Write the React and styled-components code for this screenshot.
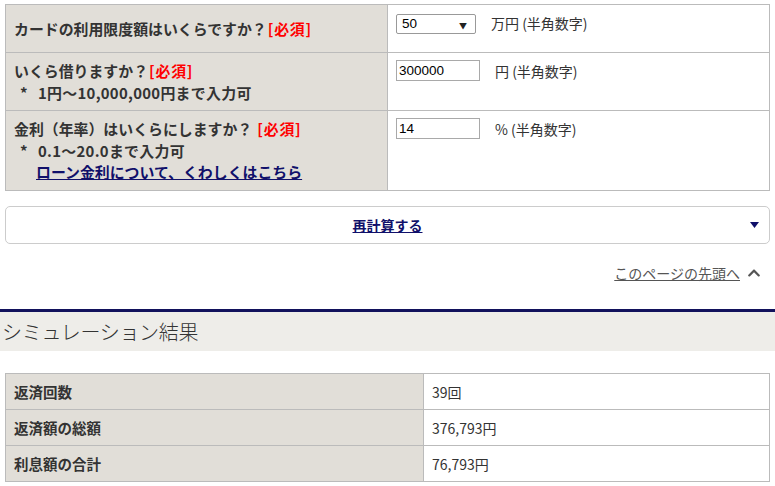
import React from 'react';
import styled, { createGlobalStyle } from 'styled-components';
import { FaChevronUp } from 'react-icons/fa';

const GlobalStyle = createGlobalStyle`
  html, body {
    margin: 0;
    padding: 0;
    background: #fff;
  }
  body {
    font-family: "Noto Sans CJK JP", "Noto Sans", sans-serif;
    color: #333;
  }
`

const Page = styled.div`
  padding: 4px 0 0;
  width: 775px;
`

const Inner = styled.div`
  padding: 0 5px;
`

const Table = styled.table`
  width: 100%;
  border-collapse: collapse;
  border: 1px solid #bbb;
  table-layout: fixed;
`

const Row = styled.tr`
  height: ${p => p.$h}px;
`

const Label = styled.th`
  box-sizing: border-box;
  width: ${p => p.$w || '50%'};
  background: #e1ded8;
  border: 1px solid #bbb;
  padding: 0 8px;
  text-align: left;
  vertical-align: middle;
  font-size: ${p => p.$size || 14.9}px;
  line-height: 21.5px;
  font-weight: bold;
  color: #333;
`

const Cell = styled.td`
  border: 1px solid #bbb;
  padding: ${p => p.$pad || '7px 8px'};
  vertical-align: ${p => p.$valign || 'top'};
  font-size: 14px;
  color: #333;
  background: #fff;
`

const Required = styled.span`
  color: #f00;
  letter-spacing: 0.8px;
  margin-left: ${p => p.$gap || 1}px;
`

const Note = styled.div`
  display: flex;
  padding-left: 5px;
  letter-spacing: 0.3px;
`

const Mark = styled.span`
  width: 18px;
  flex-shrink: 0;
  padding-left: 1px;
`

const Link = styled.a`
  display: block;
  margin-left: 22px;
  color: #10106a;
  text-decoration: underline;
  cursor: pointer;
`

const Field = styled.div`
  display: flex;
  align-items: center;
  gap: 15px;
  line-height: 20px;
`

const SelectWrap = styled.span`
  position: relative;
  display: inline-block;
  &::after {
    content: '▼';
    position: absolute;
    right: 9px;
    top: 4px;
    font-size: 8px;
    color: #222;
    pointer-events: none;
  }
`

const Select = styled.select`
  appearance: none;
  width: 80px;
  height: 20px;
  border: 1px solid #999;
  border-radius: 2px;
  background: #fff;
  padding: 0 5px;
  font-family: "Liberation Sans", Arial, sans-serif;
  font-size: 13.5px;
  color: #000;
  margin-top: 1px;
`

const Input = styled.input`
  box-sizing: border-box;
  width: 84px;
  height: 21px;
  border: 1px solid #a9a9a9;
  padding: 1px 2px;
  font-family: "Liberation Sans", Arial, sans-serif;
  font-size: 13.5px;
  color: #000;
  outline: none;
`

const Unit = styled.span`
  font-size: 14px;
  color: #333;
`

const Button = styled.div`
  position: relative;
  margin-top: 15px;
  height: 36px;
  border: 1px solid #ccc;
  border-radius: 5px;
  display: flex;
  align-items: center;
  justify-content: center;
  background: #fff;
  a {
    color: #10106a;
    font-weight: bold;
    font-size: 14px;
    text-decoration: underline;
  }
`

const Caret = styled.svg`
  position: absolute;
  right: 10px;
  top: 15px;
`

const TopLink = styled.div`
  display: flex;
  justify-content: flex-end;
  align-items: center;
  gap: 7px;
  margin-top: 19px;
  padding-right: 9px;
  a {
    color: #555;
    font-size: 14px;
    text-decoration: underline;
  }
  svg {
    color: #555;
  }
`

const Heading = styled.h2`
  margin: 26px 0 0;
  border-top: 3px solid #12125c;
  background: #eeede9;
  height: 39px;
  display: flex;
  align-items: center;
  padding-left: 2px;
  font-size: 20px;
  font-weight: 300;
  color: #333;
  letter-spacing: -0.3px;
`

const Result = styled(Table)`
  margin-top: 22px;
`

const rows = [
  ['返済回数', '39回'],
  ['返済額の総額', '376,793円'],
  ['利息額の合計', '76,793円'],
];

export default function App() {
  return (
    <Page>
      <GlobalStyle />
      <Inner>
        <Table>
          <tbody>
            <Row $h={48}>
              <Label>カードの利用限度額はいくらですか？<Required>[必須]</Required></Label>
              <Cell>
                <Field>
                  <SelectWrap>
                    <Select defaultValue="50">
                      <option value="50">50</option>
                    </Select>
                  </SelectWrap>
                  <Unit>万円 (半角数字)</Unit>
                </Field>
              </Cell>
            </Row>
            <Row $h={58}>
              <Label>
                いくら借りますか？<Required>[必須]</Required>
                <Note><Mark>*</Mark>1円～10,000,000円まで入力可</Note>
              </Label>
              <Cell>
                <Field>
                  <Input defaultValue="300000" />
                  <Unit>円 (半角数字)</Unit>
                </Field>
              </Cell>
            </Row>
            <Row $h={80}>
              <Label>
                金利（年率）はいくらにしますか？<Required $gap={5}>[必須]</Required>
                <Note><Mark>*</Mark>0.1～20.0まで入力可</Note>
                <Link>ローン金利について、くわしくはこちら</Link>
              </Label>
              <Cell>
                <Field>
                  <Input defaultValue="14" />
                  <Unit>% (半角数字)</Unit>
                </Field>
              </Cell>
            </Row>
          </tbody>
        </Table>

        <Button>
          <a>再計算する</a>
          <Caret width="9" height="6" viewBox="0 0 9 6">
            <polygon points="0,0 9,0 4.5,6" fill="#10106a" />
          </Caret>
        </Button>

        <TopLink>
          <a>このページの先頭へ</a>
          <FaChevronUp size={14} />
        </TopLink>
      </Inner>

      <Heading>シミュレーション結果</Heading>

      <Inner>
        <Result>
          <tbody>
            {rows.map(([k, v]) => (
              <Row $h={36} key={k}>
                <Label $w="418px" $size={14.5}>{k}</Label>
                <Cell $valign="middle" $pad="0 8px">{v}</Cell>
              </Row>
            ))}
          </tbody>
        </Result>
      </Inner>
    </Page>
  );
}
